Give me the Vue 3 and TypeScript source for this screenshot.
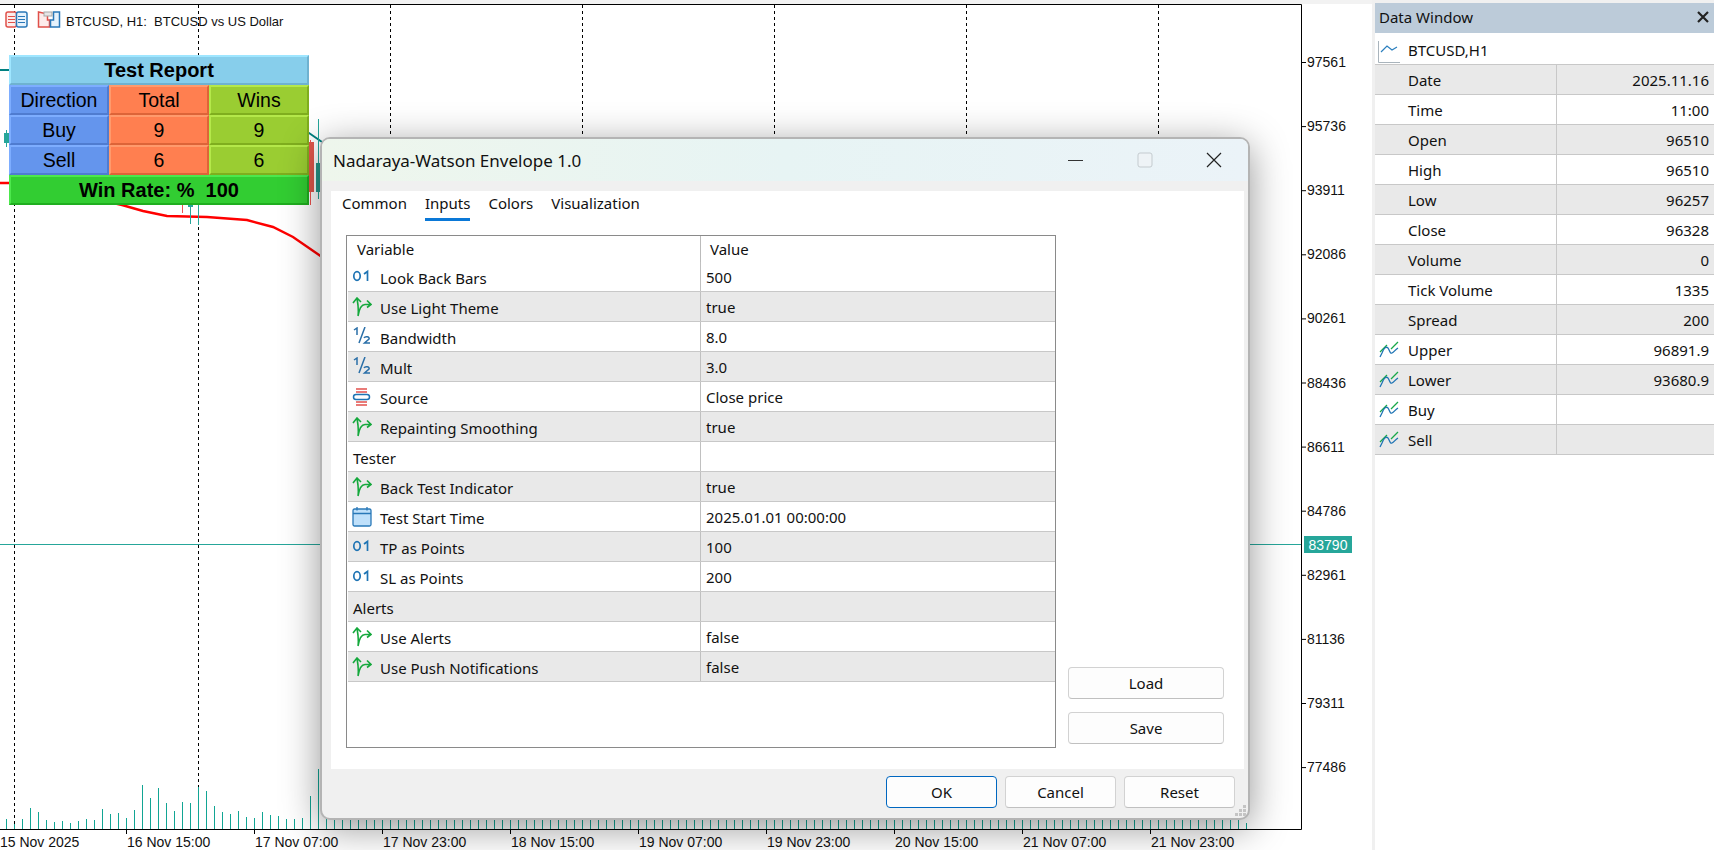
<script setup lang="ts">
type IconKind = 'int' | 'bool' | 'frac' | 'source' | 'date' | 'none'

interface InputRow {
  name: string
  value: string
  icon: IconKind
}

interface ReportRow {
  direction: string
  total: string
  wins: string
}

// 图表数据
const volumeHeights = [
  10, 5, 10, 21, 17, 9, 7, 8, 6, 8, 10, 9, 20, 15, 16, 11, 19, 44, 31, 41, 26, 18, 27, 26, 42, 38, 23,
  17, 15, 18, 12, 11, 17, 14, 13, 10, 10, 11, 33, 60, 12, 11,
]
const hiddenBars = Array.from({ length: 113 }, (_, i) => 342 + i * 8)
const priceLabels = [
  '97561', '95736', '93911', '92086', '90261', '88436', '86611', '84786', '82961', '81136', '79311', '77486',
]
const timeLabels = [
  '16 Nov 15:00', '17 Nov 07:00', '17 Nov 23:00', '18 Nov 15:00', '19 Nov 07:00',
  '19 Nov 23:00', '20 Nov 15:00', '21 Nov 07:00', '21 Nov 23:00',
]
const gridLines = [14.5, 198.5, 390.5, 582.5, 774.5, 966.5, 1158.5]

const reportRows: ReportRow[] = [
  { direction: 'Direction', total: 'Total', wins: 'Wins' },
  { direction: 'Buy', total: '9', wins: '9' },
  { direction: 'Sell', total: '6', wins: '6' },
]

const tabs = ['Common', 'Inputs', 'Colors', 'Visualization']

const inputRows: InputRow[] = [
  { name: 'Look Back Bars', value: '500', icon: 'int' },
  { name: 'Use Light Theme', value: 'true', icon: 'bool' },
  { name: 'Bandwidth', value: '8.0', icon: 'frac' },
  { name: 'Mult', value: '3.0', icon: 'frac' },
  { name: 'Source', value: 'Close price', icon: 'source' },
  { name: 'Repainting Smoothing', value: 'true', icon: 'bool' },
  { name: 'Tester', value: '', icon: 'none' },
  { name: 'Back Test Indicator', value: 'true', icon: 'bool' },
  { name: 'Test Start Time', value: '2025.01.01 00:00:00', icon: 'date' },
  { name: 'TP as Points', value: '100', icon: 'int' },
  { name: 'SL as Points', value: '200', icon: 'int' },
  { name: 'Alerts', value: '', icon: 'none' },
  { name: 'Use Alerts', value: 'false', icon: 'bool' },
  { name: 'Use Push Notifications', value: 'false', icon: 'bool' },
]

const dataRows = [
  { name: 'Date', value: '2025.11.16', buffer: false },
  { name: 'Time', value: '11:00', buffer: false },
  { name: 'Open', value: '96510', buffer: false },
  { name: 'High', value: '96510', buffer: false },
  { name: 'Low', value: '96257', buffer: false },
  { name: 'Close', value: '96328', buffer: false },
  { name: 'Volume', value: '0', buffer: false },
  { name: 'Tick Volume', value: '1335', buffer: false },
  { name: 'Spread', value: '200', buffer: false },
  { name: 'Upper', value: '96891.9', buffer: true },
  { name: 'Lower', value: '93680.9', buffer: true },
  { name: 'Buy', value: '', buffer: true },
  { name: 'Sell', value: '', buffer: true },
]
</script>

<template>
  <div class="terminal">
    <div class="chart-pane">
      <svg class="chart" width="1372" height="850" viewBox="0 0 1372 850">
        <rect x="0" y="0" width="1372" height="4" fill="#f2f2f2" />
        <!-- 网格 -->
        <line v-for="x in gridLines" :key="x" :x1="x" :x2="x" y1="5" y2="829" class="grid-line" />
        <line x1="0" x2="1301" y1="544.5" y2="544.5" stroke="#26a69a" />

        <!-- 成交量 -->
        <line
          v-for="(h, i) in volumeHeights"
          :key="'v' + i"
          :x1="6.5 + i * 8"
          :x2="6.5 + i * 8"
          y1="829"
          :y2="829 - h"
          class="volume"
        />
        <line v-for="x in hiddenBars" :key="'h' + x" :x1="x + 0.5" :x2="x + 0.5" y1="829" y2="790" class="volume" />
        <line x1="1246.5" x2="1246.5" y1="829" y2="823" class="volume" />

        <!-- 包络线和K线 -->
        <polyline points="0,70 12,70" class="upper-line" />
        <polyline points="300,127 309,133 322,142" class="upper-line" />
        <polyline
          points="0,183 12,183 100,200 122,205 143,211 167,216 207,217 247,220 273,227 293,237 322,257"
          class="lower-line"
        />
        <line x1="6.5" x2="6.5" y1="130" y2="147" stroke="#26a69a" />
        <rect x="4" y="133" width="5" height="10" fill="#26a69a" />
        <line x1="182.5" x2="182.5" y1="205" y2="213" stroke="#ef5350" />
        <line x1="190.5" x2="190.5" y1="205" y2="224" stroke="#26a69a" />
        <rect x="188" y="205" width="5" height="2" fill="#26a69a" />
        <line x1="198.5" x2="198.5" y1="205" y2="225" stroke="#26a69a" />
        <line x1="310.5" x2="310.5" y1="140" y2="205" stroke="#ef5350" />
        <rect x="309" y="142" width="5" height="50" fill="#e2574c" />
        <line x1="318.5" x2="318.5" y1="119" y2="199" stroke="#26a69a" />
        <rect x="316" y="163" width="5" height="29" fill="#26988a" />

        <!-- 边框和坐标轴 -->
        <path d="M0 4.5H1301.5V829.5H0" class="frame" />
        <g v-for="(label, i) in priceLabels" :key="label">
          <line x1="1301" x2="1306" :y1="62.5 + i * 64.1" :y2="62.5 + i * 64.1" class="frame" />
          <text x="1307" :y="67 + i * 64.1" class="axis-text">{{ label }}</text>
        </g>
        <rect x="1304" y="536" width="48" height="17" fill="#26a69a" />
        <text x="1308.5" y="550" class="axis-text tag-text">83790</text>

        <text x="0" y="847" class="axis-text">15 Nov 2025</text>
        <g v-for="(label, i) in timeLabels" :key="label">
          <line :x1="126.5 + i * 128" :x2="126.5 + i * 128" y1="829" y2="834" class="frame" />
          <text :x="127 + i * 128" y="847" class="axis-text">{{ label }}</text>
        </g>

        <!-- 左上角图标 -->
        <g fill="none" stroke-width="1.5">
          <rect x="6" y="12" width="10.500" height="15" rx="2" stroke="#e0504a" fill="#fdeceb" />
          <rect x="16.500" y="12" width="10.500" height="15" rx="2" stroke="#2a78b8" fill="#e6f2fc" />
          <path d="M8 16.500h7M8 19.500h7M8 22.500h7" stroke="#e0504a" stroke-width="1.200" />
          <path d="M18 16.500h7M18 19.500h7M18 22.500h7" stroke="#2a78b8" stroke-width="1.200" />
          <path d="M38.500 12v15h11V20h-2v-6z" stroke="#e0504a" fill="#fdeceb" />
          <path d="M53.500 14v-2h6v15h-9v-7h3z" stroke="#2a78b8" fill="#e6f2fc" />
          <rect x="44" y="12" width="8" height="4" fill="#e6e6e6" stroke="#a8a8a8" stroke-width="1" />
        </g>
        <text x="66" y="26" class="axis-text title-text">BTCUSD, H1:&nbsp; BTCUSD vs US Dollar</text>
      </svg>

      <!-- 回测报告 -->
      <div class="report">
        <div class="report-cell wide sky title">Test Report</div>
        <template v-for="row in reportRows" :key="row.direction">
          <div class="report-cell blue">{{ row.direction }}</div>
          <div class="report-cell coral">{{ row.total }}</div>
          <div class="report-cell lime">{{ row.wins }}</div>
        </template>
        <div class="report-cell wide green title">Win Rate: %&nbsp; 100</div>
      </div>

      <!-- 指标属性对话框 -->
      <div class="dialog">
        <div class="dialog-title">
          <span class="dialog-name">Nadaraya-Watson Envelope 1.0</span>
          <div class="window-controls">
            <svg width="16" height="16" viewBox="0 0 16 16"><path d="M0 8.500H15" stroke="#333" stroke-width="1" /></svg>
            <svg width="16" height="16" viewBox="0 0 16 16">
              <rect x="1" y="1" width="14" height="14" rx="2" fill="#eef3f6" stroke="#c4cbcf" />
            </svg>
            <svg width="16" height="16" viewBox="0 0 16 16"><path d="M1 1L15 15M15 1L1 15" stroke="#222" stroke-width="1.200" /></svg>
          </div>
        </div>

        <div class="dialog-body">
          <div class="tabs">
            <span v-for="tab in tabs" :key="tab" class="tab" :class="{ active: tab === 'Inputs' }">{{ tab }}</span>
          </div>

          <div class="inputs-area">
            <div class="inputs-table">
              <div class="inputs-head">
                <span class="head-variable">Variable</span>
                <span class="head-value">Value</span>
              </div>
              <div v-for="(row, i) in inputRows" :key="row.name" class="input-row" :class="{ shaded: i % 2 === 1 }">
                <div class="input-name" :class="{ group: row.icon === 'none' }">
                  <svg v-if="row.icon === 'int'" class="row-icon" viewBox="0 0 20 20" fill="none" stroke="#1f74b4" stroke-width="1.700">
                    <ellipse cx="5" cy="9" rx="3.200" ry="4.300" />
                    <path d="M12 7L15.500 4.500V14" />
                  </svg>
                  <svg v-else-if="row.icon === 'bool'" class="row-icon" viewBox="0 0 20 20" fill="none" stroke="#14a83c" stroke-width="1.600">
                    <path d="M1 6L5 1L9 5M5 1C6 7 7 13 6 19C7 13 9 7.500 13 7.500H19M15 3.500L19 7.500L15 10.500" />
                  </svg>
                  <svg v-else-if="row.icon === 'frac'" class="row-icon" viewBox="0 0 20 20" fill="none" stroke="#2a6fa8" stroke-width="1.500">
                    <path d="M2 3L5 1V8M13 0L7 16M12 11C13 9 18 9.500 17 12L12.500 16H18" />
                  </svg>
                  <svg v-else-if="row.icon === 'source'" class="row-icon" viewBox="0 0 20 20" fill="none">
                    <path d="M4 2H15M4 5H15M4 15H15M4 18H15" stroke="#e2504c" stroke-width="1.300" />
                    <rect x="1.500" y="7.500" width="16" height="5" rx="2.500" stroke="#1f74b4" stroke-width="1.500" />
                  </svg>
                  <svg v-else-if="row.icon === 'date'" class="row-icon" viewBox="0 0 20 20">
                    <rect x="1" y="2" width="18" height="17" rx="1.500" fill="#bfe0fa" stroke="#2878b8" stroke-width="1.300" />
                    <path d="M1 6.500H19M5 0V3.500M15 0V3.500" stroke="#2878b8" stroke-width="1.300" />
                  </svg>
                  <span class="name-text">{{ row.name }}</span>
                </div>
                <div class="input-value">{{ row.value }}</div>
              </div>
            </div>

            <div class="side-buttons">
              <button class="dlg-btn wide-btn">Load</button>
              <button class="dlg-btn wide-btn">Save</button>
            </div>
          </div>
        </div>

        <div class="dialog-footer">
          <button class="dlg-btn footer-btn primary">OK</button>
          <button class="dlg-btn footer-btn">Cancel</button>
          <button class="dlg-btn footer-btn">Reset</button>
          <svg class="grip" width="12" height="12" viewBox="0 0 12 12" fill="#c4c4c4">
            <rect x="8" y="0" width="3" height="3" />
            <rect x="4" y="4" width="3" height="3" />
            <rect x="8" y="4" width="3" height="3" />
            <rect x="0" y="8" width="3" height="3" />
            <rect x="4" y="8" width="3" height="3" />
            <rect x="8" y="8" width="3" height="3" />
          </svg>
        </div>
      </div>
    </div>

    <!-- 数据窗口 -->
    <div class="data-window">
      <div class="data-head">
        <span>Data Window</span>
        <svg width="12" height="12" viewBox="0 0 12 12"><path d="M1 1L11 11M11 1L1 11" stroke="#222" stroke-width="2.200" /></svg>
      </div>
      <div class="data-symbol">
        <svg class="symbol-icon" width="24" height="24" viewBox="0 0 24 24" fill="none">
          <path d="M1.500 2V23.500H23" stroke="#a9b4bc" />
          <path d="M4 13L10 7L15 11L20 8" stroke="#2b7fbe" stroke-width="1.200" />
        </svg>
        <span>BTCUSD,H1</span>
      </div>
      <div v-for="(row, i) in dataRows" :key="row.name" class="data-row" :class="{ shaded: i % 2 === 0 }">
        <div class="data-name">
          <svg v-if="row.buffer" class="buffer-icon" width="20" height="17" viewBox="0 0 20 17" fill="none">
            <path d="M1 11L8 4M12 8L19 1" stroke="#18a848" stroke-width="1.300" />
            <path d="M1 16L3 12C5 7 7 5 9 7C11 10 11 13 13 12C15 11 16 9 19 7" stroke="#1f74b4" stroke-width="1.300" />
          </svg>
          <span>{{ row.name }}</span>
        </div>
        <div class="data-value">{{ row.value }}</div>
      </div>
    </div>
  </div>
</template>

<style>
html,
body {
  margin: 0;
  overflow: hidden;
}
</style>

<style scoped>
/* 页面布局 */
.terminal {
  display: flex;
  width: 1714px;
  height: 850px;
  overflow: hidden;
  background: #f0f0f0;
  font-family: "Noto Sans", Roboto, sans-serif;
  font-size: 15px;
  color: #111;
}

.chart-pane {
  position: relative;
  flex: 0 0 1372px;
  height: 850px;
  background: #fff;
}

.chart {
  display: block;
}

.grid-line {
  stroke: #000;
  stroke-dasharray: 3 3;
}

.volume {
  stroke: #12a594;
}

.upper-line {
  fill: none;
  stroke: #008080;
  stroke-width: 2;
}

.lower-line {
  fill: none;
  stroke: #f00;
  stroke-width: 2.400;
}

.frame {
  fill: none;
  stroke: #000;
}

.axis-text {
  font-family: "Liberation Sans", Arial, sans-serif;
  font-size: 14px;
  fill: #111;
}

.title-text {
  font-size: 13px;
}

.tag-text {
  fill: #fff;
}

/* 回测报告 */
.report {
  position: absolute;
  left: 9px;
  top: 55px;
  width: 300px;
  display: grid;
  grid-template-columns: repeat(3, 100px);
  grid-auto-rows: 30px;
  font-family: "Liberation Sans", Arial, sans-serif;
  font-size: 19.500px;
  color: #000;
}

.report-cell {
  display: flex;
  align-items: center;
  justify-content: center;
  box-sizing: border-box;
  border: 2px solid;
}

.report-cell.wide {
  grid-column: span 3;
}

.report-cell.title {
  font-size: 20px;
  font-weight: 700;
}

.sky {
  background: #87ceeb;
  border-color: #9fe6ff #6fb2d0 #6fb2d0 #9fe6ff;
}

.blue {
  background: #6495ed;
  border-color: #7dadff #4f7cd0 #4f7cd0 #7dadff;
}

.coral {
  background: #ff7f50;
  border-color: #ff9a6c #dd6438 #dd6438 #ff9a6c;
}

.lime {
  background: #9acd32;
  border-color: #b4e84a #7fae1e #7fae1e #b4e84a;
}

.green {
  background: #32cd32;
  border-color: #4ce84c #1fae1f #1fae1f #4ce84c;
}

/* 对话框 */
.dialog {
  position: absolute;
  left: 320px;
  top: 137px;
  width: 930px;
  height: 683px;
  box-sizing: border-box;
  display: flex;
  flex-direction: column;
  background: #f0f0f0;
  border: 2px solid #b4b4b4;
  border-radius: 10px;
  box-shadow: 0 8px 38px rgba(0, 0, 0, 0.42);
  overflow: hidden;
}

.dialog-title {
  flex: 0 0 42px;
  display: flex;
  align-items: center;
  justify-content: space-between;
  padding-left: 11px;
  background: linear-gradient(90deg, #eef6ec 0%, #e7f4f4 50%, #ebf3f8 100%);
}

.dialog-name {
  font-size: 17px;
}

.window-controls {
  display: flex;
  gap: 53px;
  padding-right: 26px;
}

.dialog-body {
  flex: 0 0 578px;
  margin: 10px 4px 0 9px;
  padding: 0 15px;
  background: #fff;
}

.tabs {
  display: flex;
  gap: 18px;
  height: 30px;
  margin-left: -4px;
  margin-bottom: 14px;
}

.tab {
  box-sizing: border-box;
  height: 30px;
  line-height: 24px;
}

.tab.active {
  border-bottom: 3px solid #0a78d7;
}

.inputs-area {
  display: flex;
  gap: 12px;
}

.inputs-table {
  box-sizing: border-box;
  width: 710px;
  height: 513px;
  border: 1px solid #8a8a8a;
  padding-left: 1px;
}

.inputs-head {
  display: grid;
  grid-template-columns: 353px 1fr;
  height: 26px;
  line-height: 26px;
}

.head-variable {
  padding-left: 9px;
  border-right: 1px solid #bbb;
}

.head-value {
  padding-left: 9px;
}

.input-row {
  display: grid;
  grid-template-columns: 353px 1fr;
  box-sizing: border-box;
  height: 30px;
  border-bottom: 1px solid #c8c8c8;
}

.input-row.shaded {
  background: #e9e9e9;
}

.input-name {
  display: flex;
  align-items: center;
  gap: 8px;
  height: 29px;
  padding-left: 4px;
  border-right: 1px solid #c0c0c0;
}

.name-text {
  padding-top: 2px;
}

.input-name.group {
  padding-left: 5px;
}

.row-icon {
  width: 20px;
  height: 20px;
  flex: none;
}

.input-value {
  height: 29px;
  padding-left: 5px;
  line-height: 31px;
}

.side-buttons {
  display: flex;
  flex-direction: column;
  justify-content: flex-end;
  gap: 13px;
  height: 509px;
}

.dlg-btn {
  box-sizing: border-box;
  padding: 0;
  height: 32px;
  background: #fdfdfd;
  border: 1px solid #d2d2d2;
  border-bottom-color: #c0c0c0;
  border-radius: 4px;
  font: inherit;
  color: #111;
}

.wide-btn {
  width: 156px;
}

.dialog-footer {
  position: relative;
  flex: 1;
  display: flex;
  justify-content: flex-end;
  gap: 8px;
  padding: 7px 13px 0 0;
}

.footer-btn {
  width: 111px;
}

.footer-btn.primary {
  border: 1.500px solid #0067c0;
}

.grip {
  position: absolute;
  right: 1px;
  bottom: 1px;
}

/* 数据窗口 */
.data-window {
  flex: 1;
  margin: 3px 0 0 3px;
  background: #fff;
  font-size: 15px;
  overflow: hidden;
}

.data-head {
  display: flex;
  align-items: center;
  justify-content: space-between;
  box-sizing: border-box;
  height: 30px;
  padding: 0 5px 2px 4px;
  background: #bccbd9;
}

.data-symbol {
  display: flex;
  align-items: center;
  height: 32px;
  padding: 2px 0 0 33px;
  position: relative;
  box-sizing: border-box;
  border-bottom: 1px solid #c8c8c8;
}

.symbol-icon {
  position: absolute;
  left: 2px;
  top: 6px;
}

.data-row {
  display: grid;
  grid-template-columns: 182px 1fr;
  box-sizing: border-box;
  height: 30px;
  line-height: 31px;
  border-bottom: 1px solid #c8c8c8;
}

.data-row.shaded {
  background: #e9e9e9;
}

.data-name {
  position: relative;
  height: 29px;
  padding-left: 33px;
  border-right: 1px solid #c8c8c8;
}

.buffer-icon {
  position: absolute;
  left: 4px;
  top: 6px;
}

.data-value {
  height: 29px;
  padding-right: 5px;
  text-align: right;
}
</style>
